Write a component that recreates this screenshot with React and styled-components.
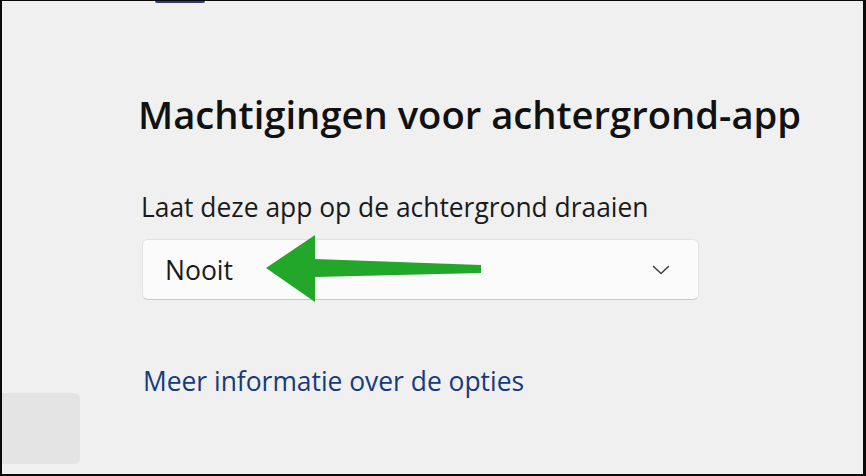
import React from "react";
import styled, { createGlobalStyle } from "styled-components";

const Global = createGlobalStyle`
  html, body {
    margin: 0;
    padding: 0;
    background: #000;
  }
  body {
    font-family: "Open Sans", "Noto Sans", sans-serif;
  }
`;

const Frame = styled.div`
  width: 866px;
  height: 476px;
  box-sizing: border-box;
  border-style: solid;
  border-color: #0a0a0a;
  border-width: 1px 3px 2px 2px;
  background: #f0f0f0;
  display: flex;
  overflow: hidden;
`;

const Sidebar = styled.div`
  width: 78px;
  flex-shrink: 0;
  padding-top: 392px;
  box-sizing: border-box;
`;

const NavItem = styled.div`
  height: 71px;
  background: #e4e4e4;
  border-radius: 0 6px 6px 0;
`;

const Main = styled.div`
  flex: 1;
  padding-left: 58px;
  display: flex;
  flex-direction: column;
  align-items: flex-start;
`;

const TopTab = styled.div`
  width: 50px;
  height: 2px;
  margin-left: 17px;
  background: #2d3b7c;
  border-radius: 0 0 3px 3px;
`;

const Title = styled.h1`
  margin: 87px 0 0;
  font-size: 38.2px;
  line-height: 48px;
  font-weight: 600;
  color: #111;
  white-space: nowrap;
`;

const Label = styled.div`
  margin: 52px 0 0 3px;
  font-size: 26.4px;
  line-height: 34px;
  color: #1a1a1a;
  white-space: nowrap;
`;

const Select = styled.div`
  position: relative;
  margin: 15px 0 0 4px;
  width: 557px;
  height: 61px;
  box-sizing: border-box;
  padding: 0 28px 0 22px;
  background: #fbfbfb;
  border: 1px solid #e2e2e2;
  border-bottom-color: #c9c9c9;
  border-radius: 6px;
  display: flex;
  align-items: center;
  justify-content: space-between;
`;

const Value = styled.span`
  font-size: 26.5px;
  color: #1a1a1a;
`;

const Overlay = styled.svg`
  position: absolute;
  left: -1px;
  top: -1px;
  overflow: visible;
  pointer-events: none;
`;

const Link = styled.a`
  margin: 64px 0 0 5px;
  font-size: 26.4px;
  line-height: 34px;
  color: #163a7f;
  text-decoration: none;
  white-space: nowrap;
`;

const Chevron = () => (
  <svg width="18" height="10" viewBox="0 0 18 10">
    <path d="M1.5 1.5 L9 8.5 L16.5 1.5" fill="none" stroke="#444" strokeWidth="1.6" strokeLinecap="round" strokeLinejoin="round" />
  </svg>
);

export default function App() {
  return (
    <>
      <Global />
      <Frame>
        <Sidebar>
          <NavItem />
        </Sidebar>
        <Main>
          <TopTab />
          <Title>Machtigingen voor achtergrond-app</Title>
          <Label>Laat deze app op de achtergrond draaien</Label>
          <Select>
            <Value>Nooit</Value>
            <Chevron />
            <Overlay width="557" height="61">
              <polygon
                points="124,29 173,-4 173,20 339,26 339,34 173,38 173,63"
                fill="#22a72a"
              />
            </Overlay>
          </Select>
          <Link href="#">Meer informatie over de opties</Link>
        </Main>
      </Frame>
    </>
  );
}
